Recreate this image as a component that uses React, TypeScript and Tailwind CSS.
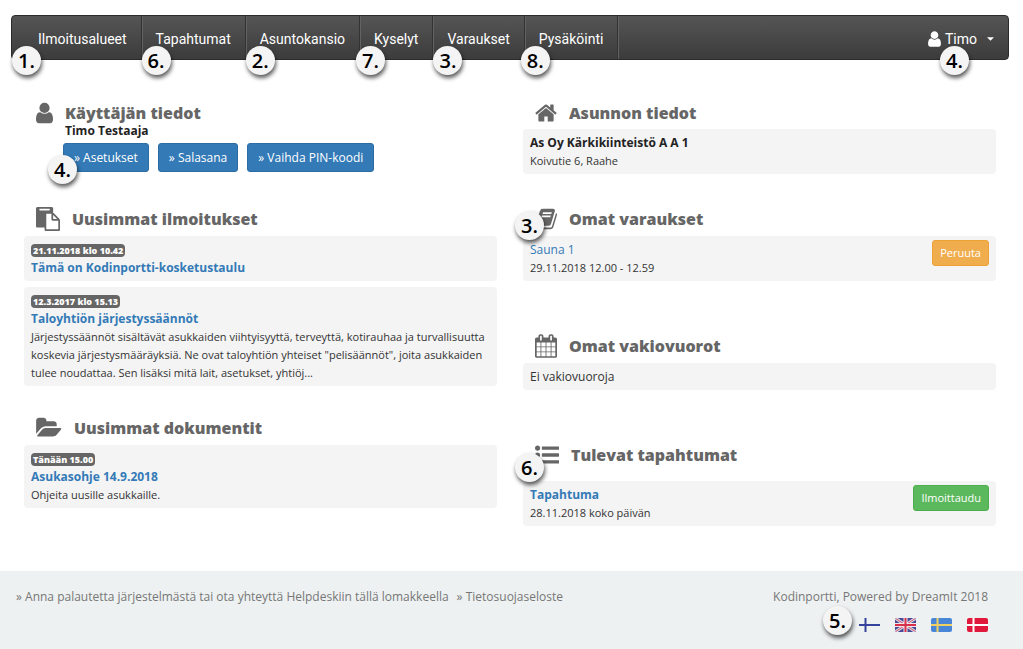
import type { ReactNode } from 'react';
import clsx from 'clsx';

interface IconShape {
    viewBox: string;
    width: number;
    path: string;
}

const icons: Record<string, IconShape> = {
    user: {
        viewBox: '256 0 1280 1792',
        width: 17,
        path: 'M1536 1399q0 109-62.5 187t-150.5 78h-854q-88 0-150.5-78t-62.5-187q0-85 8.5-160.5t31.5-152 58.5-131 94-89 134.5-34.5q131 128 313 128t313-128q76 0 134.5 34.5t94 89 58.5 131 31.5 152 8.5 160.5zm-256-887q0 159-112.5 271.5t-271.5 112.5-271.5-112.5-112.5-271.5 112.5-271.5 271.5-112.5 271.5 112.5 112.5 271.5z',
    },
    paste: {
        viewBox: '0 0 1792 1792',
        width: 24,
        path: 'M768 1664h896v-640h-416q-40 0-68-28t-28-68v-416h-384v1152zm256-1440v-64q0-13-9.5-22.5t-22.5-9.5h-704q-13 0-22.5 9.5t-9.5 22.5v64q0 13 9.5 22.5t22.5 9.5h704q13 0 22.5-9.5t9.5-22.5zm256 672h299l-299-299v299zm512 128v672q0 40-28 68t-68 28h-960q-40 0-68-28t-28-68v-160h-544q-40 0-68-28t-28-68v-1344q0-40 28-68t68-28h1088q40 0 68 28t28 68v328q21 13 36 28l408 408q28 28 48 76t20 88z',
    },
    folder: {
        viewBox: '0 0 1920 1792',
        width: 26,
        path: 'M1879 952q0 31-31 66l-336 396q-43 51-120.5 86.5t-143.5 35.5h-1088q-34 0-60.5-13t-26.5-43q0-31 31-66l336-396q43-51 120.5-86.5t143.5-35.5h1088q34 0 60.5 13t26.5 43zm-343-344v160h-832q-94 0-197 47.5t-164 119.5l-337 396-5 6q0-4-.5-12.5t-.5-12.5v-960q0-92 66-158t158-66h320q92 0 158 66t66 158v32h544q92 0 158 66t66 158z',
    },
    home: {
        viewBox: '64 0 1664 1792',
        width: 22,
        path: 'M1472 992v480q0 26-19 45t-45 19h-384v-384h-256v384h-384q-26 0-45-19t-19-45v-480q0-1 .5-3t.5-3l575-474 575 474q1 2 1 6zm223-69l-62 74q-8 9-21 11h-3q-13 0-21-7l-692-577-692 577q-12 8-24 7-13-2-21-11l-62-74q-8-10-7-23.5t11-21.5l719-599q32-26 76-26t76 26l244 204v-195q0-14 9-23t23-9h192q14 0 23 9t9 23v408l219 182q10 8 11 21.5t-7 23.5z',
    },
    book: {
        viewBox: '64 0 1664 1792',
        width: 22,
        path: 'M1703 478q40 57 18 129l-275 906q-19 64-76.5 107.5t-122.5 43.5h-923q-77 0-148.5-53.5t-99.5-131.5q-24-67-2-127 0-4 3-27t4-37q1-8-3-21.5t-3-19.5q2-11 8-21t16.5-23.5 16.5-23.5q23-38 45-91.5t30-91.5q3-10 .5-30t-.5-28q3-11 17-28t17-23q21-36 42-92t25-90q1-9-2.5-32t.5-28q4-13 22-30.5t22-22.5q19-26 42.5-84.5t27.5-96.5q1-8-3-25.5t-2-26.5q2-8 9-18t18-23 17-21q8-12 16.5-30.5t15-35 16-36 19.5-32 26.5-23.5 36-11.5 47.5 5.5l-1 3q38-9 51-9h761q74 0 114 56t18 130l-274 906q-36 119-71.5 153.5t-128.5 34.5h-869q-27 0-38 15-11 16-1 43 24 70 144 70h923q29 0 56-15.5t35-41.5l300-987q7-22 5-57 38 15 59 43zm-1064 2q-4 13 2 22.5t20 9.5h608q13 0 25.5-9.5t16.5-22.5l21-64q4-13-2-22.5t-20-9.5h-608q-13 0-25.5 9.5t-16.5 22.5zm-83 256q-4 13 2 22.5t20 9.5h608q13 0 25.5-9.5t16.5-22.5l21-64q4-13-2-22.5t-20-9.5h-608q-13 0-25.5 9.5t-16.5 22.5z',
    },
    calendar: {
        viewBox: '64 0 1664 1792',
        width: 22,
        path: 'M192 1664h288v-288h-288v288zm352 0h320v-288h-320v288zm-352-352h288v-320h-288v320zm352 0h320v-320h-320v320zm-352-384h288v-288h-288v288zm736 736h320v-288h-320v288zm-384-736h320v-288h-320v288zm768 736h288v-288h-288v288zm-384-352h320v-320h-320v320zm-352-864v-288q0-13-9.5-22.5t-22.5-9.5h-64q-13 0-22.5 9.5t-9.5 22.5v288q0 13 9.5 22.5t22.5 9.5h64q13 0 22.5-9.5t9.5-22.5zm736 864h288v-320h-288v320zm-384-384h320v-288h-320v288zm384 0h288v-288h-288v288zm32-480v-288q0-13-9.5-22.5t-22.5-9.5h-64q-13 0-22.5 9.5t-9.5 22.5v288q0 13 9.5 22.5t22.5 9.5h64q13 0 22.5-9.5t9.5-22.5zm384-64v1280q0 52-38 90t-90 38h-1408q-52 0-90-38t-38-90v-1280q0-52 38-90t90-38h128v-96q0-66 47-113t113-47h64q66 0 113 47t47 113v96h384v-96q0-66 47-113t113-47h64q66 0 113 47t47 113v96h128q52 0 90 38t38 90z',
    },
    list: {
        viewBox: '0 0 1792 1792',
        width: 24,
        path: 'M384 1408q0 80-56 136t-136 56-136-56-56-136 56-136 136-56 136 56 56 136zm0-512q0 80-56 136t-136 56-136-56-56-136 56-136 136-56 136 56 56 136zm1408 416v192q0 13-9.5 22.5t-22.5 9.5h-1216q-13 0-22.5-9.5t-9.5-22.5v-192q0-13 9.5-22.5t22.5-9.5h1216q13 0 22.5 9.5t9.5 22.5zm-1408-928q0 80-56 136t-136 56-136-56-56-136 56-136 136-56 136 56 56 136zm1408 416v192q0 13-9.5 22.5t-22.5 9.5h-1216q-13 0-22.5-9.5t-9.5-22.5v-192q0-13 9.5-22.5t22.5-9.5h1216q13 0 22.5 9.5t9.5 22.5zm0-512v192q0 13-9.5 22.5t-22.5 9.5h-1216q-13 0-22.5-9.5t-9.5-22.5v-192q0-13 9.5-22.5t22.5-9.5h1216q13 0 22.5 9.5t9.5 22.5z',
    },
};

const navItems = [
    { label: 'Ilmoitusalueet', step: 1, marker: 'left-0' },
    { label: 'Tapahtumat', step: 6, marker: 'left-0' },
    { label: 'Asuntokansio', step: 2, marker: 'left-0' },
    { label: 'Kyselyt', step: 7, marker: '-left-1' },
    { label: 'Varaukset', step: 3, marker: 'left-0' },
    { label: 'Pysäköinti', step: 8, marker: '-left-1' },
];

// Numbered guide marker that floats over the element it explains
function Marker({ step, className }: { step: number; className: string }) {
    return (
        <span
            className={clsx(
                'absolute z-10 flex size-[29px] items-center justify-center rounded-full bg-[#f4f4f4] text-xl leading-none font-semibold text-black shadow-[1px_3px_4px_rgba(0,0,0,0.65)]',
                className,
            )}
        >
            {step}.
        </span>
    );
}

function SectionTitle({ icon, children, step }: { icon: string; children: ReactNode; step?: ReactNode }) {
    const shape = icons[icon];
    return (
        <div className="relative flex h-5 items-center gap-3 pl-3 text-[#666]">
            <svg viewBox={shape.viewBox} width={shape.width} height={24} fill="currentColor" className="shrink-0" aria-hidden="true">
                <path d={shape.path} />
            </svg>
            <h2 className="text-base leading-5 font-extrabold">{children}</h2>
            {step}
        </div>
    );
}

function Card({ children, action }: { children: ReactNode; action?: ReactNode }) {
    return (
        <div className="flex items-start justify-between rounded-sm bg-[#f4f4f4] px-[7px] text-[11px] leading-[18px] text-[#333]">
            <div className="pt-[5px] pb-1">{children}</div>
            {action}
        </div>
    );
}

function TimeLabel({ children }: { children: ReactNode }) {
    return (
        <div className="flex h-[18px] items-center">
            <span className="rounded-sm bg-[#666] px-0.5 text-[9px] leading-[13px] font-extrabold text-white">{children}</span>
        </div>
    );
}

function CardLink({ children, bold = true }: { children: ReactNode; bold?: boolean }) {
    return (
        <a href="#" className={clsx('block text-xs leading-[18px] text-[#337ab7]', bold && 'font-bold')}>
            {children}
        </a>
    );
}

function FinnishFlag() {
    return (
        <svg width="21" height="14" viewBox="0 0 21 14">
            <path d="M0 7h21M6.5 0v14" stroke="#34449c" strokeWidth="2" />
        </svg>
    );
}

function BritishFlag() {
    return (
        <svg width="21" height="14" viewBox="0 0 21 14">
            <clipPath id="gb">
                <rect width="21" height="14" rx="2" />
            </clipPath>
            <g clipPath="url(#gb)">
                <path d="M0 0h21v14H0z" fill="#4a4a94" />
                <path d="M0 0l21 14M21 0L0 14" stroke="#dcdce8" strokeWidth="3" />
                <path d="M0 0l21 14M21 0L0 14" stroke="#d8506a" strokeWidth="1" />
                <path d="M10.5 0v14M0 7h21" stroke="#f0e6ec" strokeWidth="4" />
                <path d="M10.5 0v14M0 7h21" stroke="#d8304a" strokeWidth="2" />
            </g>
        </svg>
    );
}

function CrossFlag({ field, cross }: { field: string; cross: string }) {
    return (
        <svg width="21" height="14" viewBox="0 0 21 14">
            <rect width="21" height="14" rx="2" fill={field} />
            <path d="M0 7h21M6.5 0v14" stroke={cross} strokeWidth="2" />
        </svg>
    );
}

const languages = [
    { name: 'Suomi', flag: <FinnishFlag /> },
    { name: 'English', flag: <BritishFlag /> },
    { name: 'Svenska', flag: <CrossFlag field="#4a86d8" cross="#f0d060" /> },
    { name: 'Dansk', flag: <CrossFlag field="#e0183c" cross="#ffffff" /> },
];

const userActions = ['Asetukset', 'Salasana', 'Vaihda PIN-koodi'];

export default function App() {
    return (
        <div className="flex min-h-screen flex-col bg-white font-['Open_Sans',sans-serif] text-[#333]">
            <header className="pt-[15px] pr-3.5 pl-[11px]">
                <nav className="flex h-[45px] items-stretch justify-between rounded-sm border border-[#2b2b2b] bg-linear-to-b from-[#555] to-[#3c3c3c] text-sm text-white">
                    <ul className="flex">
                        {navItems.map((item) => (
                            <li key={item.label} className="relative flex border-r border-[#333] shadow-[1px_0_0_#626262] first:pl-3">
                                <a href="#" className="flex items-center px-3.5 pt-0.5 font-[Roboto,sans-serif]">
                                    {item.label}
                                </a>
                                <Marker step={item.step} className={clsx('-bottom-4', item.marker)} />
                            </li>
                        ))}
                    </ul>
                    <button type="button" className="relative flex items-center gap-1 pt-0.5 pr-3.5">
                        <svg viewBox="256 0 1280 1792" width="13" height="18" fill="currentColor" aria-hidden="true">
                            <path d={icons.user.path} />
                        </svg>
                        <span className="font-[Roboto,sans-serif]">Timo</span>
                        <svg viewBox="0 0 8 4" width="7" height="4" fill="currentColor" className="ml-1.5" aria-hidden="true">
                            <path d="M0 0h8L4 4z" />
                        </svg>
                        <Marker step={4} className="-bottom-4 left-3" />
                    </button>
                </nav>
            </header>

            <main className="grid grid-cols-2 gap-[26px] pt-[43px] pr-[27px] pb-[45px] pl-6">
                <div>
                    <section>
                        <SectionTitle icon="user">Käyttäjän tiedot</SectionTitle>
                        <p className="pl-[41px] text-xs leading-4 font-bold text-[#222]">Timo Testaaja</p>
                        <div className="relative mt-1 flex gap-[9px] pl-[39px]">
                            {userActions.map((action) => (
                                <button
                                    key={action}
                                    type="button"
                                    className="h-[29px] rounded-[3px] border border-[#2e6da4] bg-[#337ab7] px-2.5 text-xs text-white"
                                >
                                    » {action}
                                </button>
                            ))}
                            <Marker step={4} className="top-3 left-6" />
                        </div>
                    </section>

                    <section className="mt-[37px]">
                        <SectionTitle icon="paste">Uusimmat ilmoitukset</SectionTitle>
                        <div className="mt-[7px] space-y-1.5">
                            <Card>
                                <TimeLabel>21.11.2018 klo 10.42</TimeLabel>
                                <CardLink>Tämä on Kodinportti-kosketustaulu</CardLink>
                            </Card>
                            <Card>
                                <TimeLabel>12.3.2017 klo 15.13</TimeLabel>
                                <CardLink>Taloyhtiön järjestyssäännöt</CardLink>
                                <p>
                                    Järjestyssäännöt sisältävät asukkaiden viihtyisyyttä, terveyttä, kotirauhaa ja turvallisuutta
                                    koskevia järjestysmääräyksiä. Ne ovat taloyhtiön yhteiset "pelisäännöt", joita asukkaiden
                                    tulee noudattaa. Sen lisäksi mitä lait, asetukset, yhtiöj...
                                </p>
                            </Card>
                        </div>
                    </section>

                    <section className="mt-8">
                        <SectionTitle icon="folder">Uusimmat dokumentit</SectionTitle>
                        <div className="mt-[7px]">
                            <Card>
                                <TimeLabel>Tänään 15.00</TimeLabel>
                                <CardLink>Asukasohje 14.9.2018</CardLink>
                                <p>Ohjeita uusille asukkaille.</p>
                            </Card>
                        </div>
                    </section>
                </div>

                <div>
                    <section>
                        <SectionTitle icon="home">Asunnon tiedot</SectionTitle>
                        <div className="mt-1.5">
                            <Card>
                                <p className="text-xs leading-[18px] font-bold text-[#222]">As Oy Kärkikiinteistö A A 1</p>
                                <p>Koivutie 6, Raahe</p>
                            </Card>
                        </div>
                    </section>

                    <section className="mt-[35px]">
                        <SectionTitle icon="book" step={<Marker step={3} className="top-0.5 -left-2" />}>
                            Omat varaukset
                        </SectionTitle>
                        <div className="mt-[7px]">
                            <Card
                                action={
                                    <button type="button" className="mt-1 h-[26px] rounded-[3px] border border-[#eea236] bg-[#f0ad4e] px-[7px] text-[11px] text-white">
                                        Peruuta
                                    </button>
                                }
                            >
                                <CardLink bold={false}>Sauna 1</CardLink>
                                <p>29.11.2018 12.00 - 12.59</p>
                            </Card>
                        </div>
                    </section>

                    <section className="mt-[55px]">
                        <SectionTitle icon="calendar">Omat vakiovuorot</SectionTitle>
                        <div className="mt-[7px]">
                            <Card>
                                <p className="text-xs leading-[18px]">Ei vakiovuoroja</p>
                            </Card>
                        </div>
                    </section>

                    <section className="mt-[55px]">
                        <SectionTitle icon="list" step={<Marker step={6} className="top-2 -left-2" />}>
                            Tulevat tapahtumat
                        </SectionTitle>
                        <div className="mt-4">
                            <Card
                                action={
                                    <button type="button" className="mt-1 h-[26px] rounded-[3px] border border-[#4cae4c] bg-[#5cb85c] px-[7px] text-[11px] text-white">
                                        Ilmoittaudu
                                    </button>
                                }
                            >
                                <CardLink>Tapahtuma</CardLink>
                                <p>28.11.2018 koko päivän</p>
                            </Card>
                        </div>
                    </section>
                </div>
            </main>

            <footer className="flex grow items-start justify-between bg-[#edf1f1] pt-[17px] pr-[35px] pb-4 pl-4 text-xs leading-[18px] text-[#777]">
                <div className="flex gap-2">
                    <a href="#">» Anna palautetta järjestelmästä tai ota yhteyttä Helpdeskiin tällä lomakkeella</a>
                    <a href="#">» Tietosuojaseloste</a>
                </div>
                <div className="flex flex-col items-end">
                    <p>Kodinportti, Powered by DreamIt 2018</p>
                    <div className="relative mt-3 flex gap-[15px]">
                        {languages.map((language) => (
                            <a key={language.name} href="#" aria-label={language.name}>
                                {language.flag}
                            </a>
                        ))}
                        <Marker step={5} className="-top-3 -left-9" />
                    </div>
                </div>
            </footer>
        </div>
    );
}
